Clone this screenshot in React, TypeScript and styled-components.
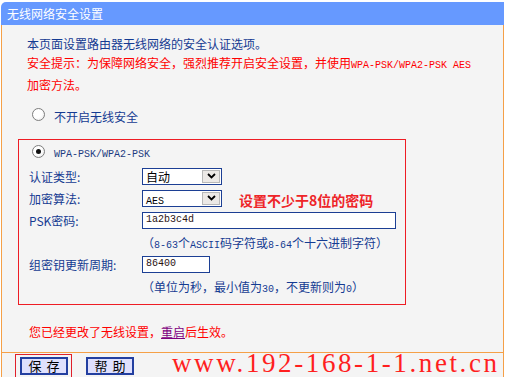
import React from 'react';
import styled, { createGlobalStyle } from 'styled-components';

const GlobalStyle = createGlobalStyle`
	html, body {
		margin: 0;
		padding: 0;
		background: #ffffff;
	}
`;

const NAVY = '#143b92';
const ORANGE = '#f5a047';

const Frame = styled.div`
	width: 503px;
	margin: 2px 0 0 1px;
	font-family: 'Noto Sans CJK SC', 'Noto Sans', sans-serif;
	font-size: 12px;
	color: ${NAVY};
`;

const TitleBar = styled.div`
	height: 23px;
	line-height: 23px;
	padding-left: 6px;
	background: #6699ff;
	border-top-left-radius: 5px;
	color: #ffffff;
	font-size: 12px;
`;

const Body = styled.div`
	background: #f4f4f4;
	border-left: 1px solid ${ORANGE};
	border-right: 1px solid ${ORANGE};
	padding: 9px 0 11px 16px;
`;

const Intro = styled.div`
	margin-left: 9px;
	line-height: 19px;
	white-space: nowrap;
`;

const Line = styled.div<{ $warn?: boolean }>`
	color: ${(p) => (p.$warn ? '#ff0000' : NAVY)};
`;

const Mono = styled.span<{ $color?: string }>`
	font-family: 'Liberation Mono', monospace;
	font-size: 10px;
	color: ${(p) => p.$color || 'inherit'};
`;

const OptionRow = styled.div<{ $height: number }>`
	display: flex;
	align-items: center;
	height: ${(p) => p.$height}px;
`;

const Radio = styled.span<{ $checked?: boolean }>`
	position: relative;
	width: 11px;
	height: 11px;
	border-radius: 50%;
	border: 1px solid #7d7d7d;
	background: radial-gradient(circle at 40% 40%, #ffffff 45%, #e4e4e4 100%);
	flex: none;
	margin-top: -3px;

	&::after {
		content: '';
		display: ${(p) => (p.$checked ? 'block' : 'none')};
		position: absolute;
		left: 3px;
		top: 3px;
		width: 5px;
		height: 5px;
		border-radius: 50%;
		background: #111111;
	}
`;

const OffOption = styled(OptionRow)`
	margin: 12px 0 13px 14px;
`;

const OptionText = styled.span`
	margin-left: 9px;
`;

const SecurityBox = styled.div`
	box-sizing: border-box;
	width: 388px;
	border: 1px solid #ee1c24;
	padding: 0 0 7px 10px;
`;

const WpaOption = styled(OptionRow)`
	padding-left: 3px;
	margin-top: 1px;
`;

const WpaLabel = styled.span`
	margin-left: 9px;
	margin-top: 2px;
	font-family: 'Liberation Mono', monospace;
	font-size: 10px;
	color: #1d3b80;
`;

const FieldRow = styled.div<{ $height: number }>`
	display: flex;
	align-items: center;
	height: ${(p) => p.$height}px;
`;

const Label = styled.span`
	width: 113px;
	flex: none;
`;

const Hint = styled.span`
	margin-left: 113px;
	white-space: nowrap;
`;

const SelectBox = styled.div`
	box-sizing: border-box;
	display: flex;
	align-items: stretch;
	width: 80px;
	height: 17px;
	border: 1px solid #1c3f94;
	background: #ffffff;
	padding: 1px;
`;

const SelectValue = styled.span`
	flex: 1;
	padding-left: 2px;
	line-height: 13px;
	color: #000000;
`;

const SelectArrow = styled.span`
	box-sizing: border-box;
	width: 18px;
	display: flex;
	align-items: center;
	justify-content: center;
	background: #ece9e6;
	border: 1px solid #b8b8b8;
`;

const TextBox = styled.div<{ $width: number }>`
	box-sizing: border-box;
	width: ${(p) => p.$width}px;
	height: 17px;
	border: 1px solid #1c3f94;
	background: #ffffff;
	padding-left: 3px;
	line-height: 14px;
	font-family: 'Liberation Mono', monospace;
	font-size: 10px;
	color: #2a1212;
`;

const Tip = styled.span`
	margin-left: 17px;
	margin-top: 3px;
	color: #ee2428;
	font-size: 14px;
	font-weight: bold;
	white-space: nowrap;
`;

const Notice = styled.div`
	margin: 17px 0 0 11px;
	line-height: 19px;
	color: #ff0000;
`;

const RebootLink = styled.a`
	color: #800080;
	text-decoration: underline;
`;

const Footer = styled.div`
	display: flex;
	align-items: center;
	height: 25px;
	padding-left: 13px;
	background: #f4f4f4;
	border: 1px solid ${ORANGE};
`;

const FocusRing = styled.div`
	display: flex;
	flex: none;
	border: 1px solid #e0202a;
	padding: 2px 3px 2px 4px;
`;

const Button = styled.button`
	box-sizing: border-box;
	flex: none;
	width: 48px;
	height: 18px;
	padding: 0;
	border: 2px solid #233fa0;
	background: #dfe0fd;
	font-family: 'Noto Sans CJK SC', sans-serif;
	font-size: 13px;
	line-height: 13px;
	letter-spacing: 5px;
	text-indent: 5px;
	white-space: nowrap;
	color: #000000;
`;

const HelpButton = styled(Button)`
	margin-left: 14px;
`;

const Watermark = styled.span`
	flex: none;
	align-self: flex-start;
	margin-left: 38px;
	font-family: 'Liberation Serif', serif;
	font-size: 27px;
	line-height: 20px;
	letter-spacing: 2.6px;
	color: #ff1f1f;
	white-space: nowrap;
`;

const Chevron = () => (
	<svg width="9" height="6" viewBox="0 0 9 6">
		<path d="M1 1 L4.5 4.5 L8 1" fill="none" stroke="#000" strokeWidth="1.8" />
	</svg>
);

const Select = ({ children }: { children: React.ReactNode }) => (
	<SelectBox>
		<SelectValue>{children}</SelectValue>
		<SelectArrow>
			<Chevron />
		</SelectArrow>
	</SelectBox>
);

const App = () => {
	return (
		<>
			<GlobalStyle />
			<Frame>
				<TitleBar>无线网络安全设置</TitleBar>
				<Body>
					<Intro>
						<Line>本页面设置路由器无线网络的安全认证选项。</Line>
						<Line $warn>
							安全提示：为保障网络安全，强烈推荐开启安全设置，并使用<Mono>WPA-PSK/WPA2-PSK AES</Mono>
						</Line>
						<Line $warn>加密方法。</Line>
					</Intro>

					<OffOption $height={20}>
						<Radio />
						<OptionText>不开启无线安全</OptionText>
					</OffOption>

					<SecurityBox>
						<WpaOption $height={24}>
							<Radio $checked />
							<WpaLabel>WPA-PSK/WPA2-PSK</WpaLabel>
						</WpaOption>
						<FieldRow $height={22}>
							<Label>认证类型:</Label>
							<Select>自动</Select>
						</FieldRow>
						<FieldRow $height={22}>
							<Label>加密算法:</Label>
							<Select>
								<Mono>AES</Mono>
							</Select>
							<Tip>设置不少于8位的密码</Tip>
						</FieldRow>
						<FieldRow $height={22}>
							<Label>PSK密码:</Label>
							<TextBox $width={254}>1a2b3c4d</TextBox>
						</FieldRow>
						<FieldRow $height={23}>
							<Hint>
								（<Mono>8-63</Mono>个<Mono>ASCII</Mono>码字符或<Mono>8-64</Mono>个十六进制字符）
							</Hint>
						</FieldRow>
						<FieldRow $height={21}>
							<Label>组密钥更新周期:</Label>
							<TextBox $width={68}>86400</TextBox>
						</FieldRow>
						<FieldRow $height={22}>
							<Hint>
								（单位为秒，最小值为<Mono>30</Mono>，不更新则为<Mono>0</Mono>）
							</Hint>
						</FieldRow>
					</SecurityBox>

					<Notice>
						您已经更改了无线设置，<RebootLink>重启</RebootLink>后生效。
					</Notice>
				</Body>
				<Footer>
					<FocusRing>
						<Button>保存</Button>
					</FocusRing>
					<HelpButton>帮助</HelpButton>
					<Watermark>www.192-168-1-1.net.cn</Watermark>
				</Footer>
			</Frame>
		</>
	);
};

export default App;
